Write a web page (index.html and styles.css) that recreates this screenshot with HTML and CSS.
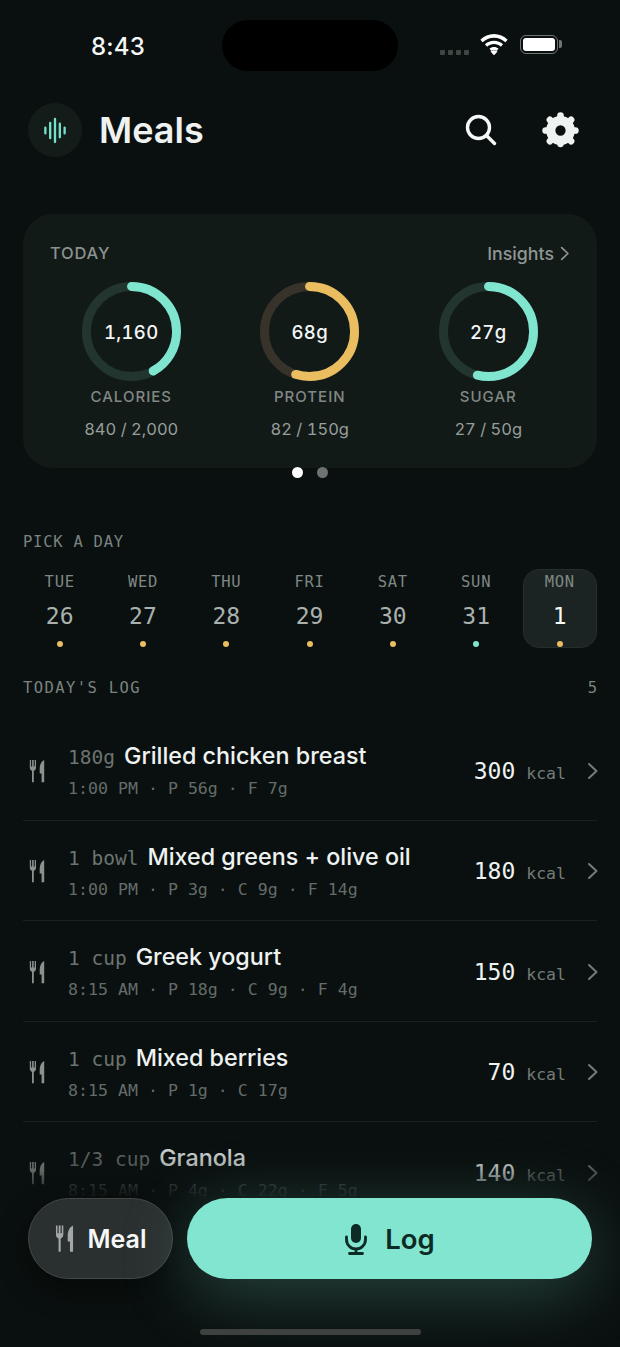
FILE: index.html
```html
<!DOCTYPE html>
<html lang="en">
<head>
<meta charset="utf-8">
<title>Meals</title>
<link rel="stylesheet" href="styles.css">
</head>
<body>
<svg class="defs" width="0" height="0" aria-hidden="true">
  <symbol id="cutlery" viewBox="0 0 16 24">
    <path d="M.8 1h1.300v6.600h1V1h1.600v6.600h1V1h1.300v7.600c0 1.700-.9 2.900-2.200 3.300V23.200H3V11.900C1.700 11.500.8 10.300.8 8.600z"/>
    <path d="M15.200 1v22.200h-2.600v-8.700h-1.900V9.500c0-4 1.800-7.200 4.500-8.500z"/>
  </symbol>
  <symbol id="chev" viewBox="0 0 12 18">
    <path d="M2 2l7.500 7L2 16" fill="none" stroke="currentColor" stroke-width="2" stroke-linecap="round" stroke-linejoin="round"/>
  </symbol>
</svg>
<div class="phone">
  <div class="status">
    <span class="time">8:43</span>
    <span class="island"></span>
    <div class="status-right">
      <span class="signal"><i></i><i></i><i></i><i></i></span>
      <svg class="wifi" viewBox="2 1 24 18.500"><path d="M14 4.200c3.900 0 7.400 1.500 10 4l2-2.200C22.800 2.900 18.600 1 14 1S5.200 2.900 2 6l2 2.200c2.600-2.500 6.100-4 10-4zm0 5.700c2.300 0 4.400.9 6 2.400l2-2.200c-2.100-2-4.900-3.200-8-3.200s-5.900 1.200-8 3.200l2 2.200c1.600-1.500 3.700-2.400 6-2.400zm0 5.500c-1.200 0-2.200.4-3.100 1.100l3.100 3.300 3.100-3.300c-.9-.7-1.900-1.100-3.100-1.100zm0-2.900c1.500 0 2.900.6 4 1.500l-2 2.100c-.6-.3-1.300-.5-2-.5s-1.400.2-2 .5l-2-2.100c1.100-.9 2.500-1.500 4-1.500z"/></svg>
      <span class="battery"><span class="battery-fill"></span></span>
    </div>
  </div>

  <header class="topbar">
    <span class="logo">
      <svg viewBox="0 0 24 28" class="wave"><path d="M2 11v6M7 6v16M12 2v24M17 7v14M22 11v6"/></svg>
    </span>
    <h1>Meals</h1>
    <svg class="search" viewBox="0 0 32 32"><circle cx="13.500" cy="13.500" r="11"/><path d="M21.500 21.500l8 8"/></svg>
    <svg class="gear" viewBox="0 0 36 36"><circle cx="18" cy="18" r="9.500" class="gear-ring"/><path class="gear-teeth" d="M18 5v-1.500M18 31v-1.500M5 18H3.500M32.500 18H31M8.800 8.800l-1.100-1.100M28.300 28.300l-1.100-1.100M8.800 27.200l-1.100 1.100M28.300 7.700l-1.100 1.100"/></svg>
  </header>

  <section class="card">
    <div class="card-head">
      <span class="today">TODAY</span>
      <span class="insights">Insights <svg class="chev-small"><use href="#chev"/></svg></span>
    </div>
    <div class="rings">
      <div class="ring-col">
        <div class="ring">
          <svg viewBox="0 0 100 100"><circle cx="50" cy="50" r="45.500" class="track track-mint"/><circle cx="50" cy="50" r="45.500" pathLength="100" stroke-dasharray="42 100" class="arc arc-mint"/></svg>
          <span class="ring-value">1,160</span>
        </div>
        <span class="ring-label">CALORIES</span>
        <span class="ring-sub">840 / 2,000</span>
      </div>
      <div class="ring-col">
        <div class="ring">
          <svg viewBox="0 0 100 100"><circle cx="50" cy="50" r="45.500" class="track track-gold"/><circle cx="50" cy="50" r="45.500" pathLength="100" stroke-dasharray="55 100" class="arc arc-gold"/></svg>
          <span class="ring-value">68g</span>
        </div>
        <span class="ring-label">PROTEIN</span>
        <span class="ring-sub">82 / 150g</span>
      </div>
      <div class="ring-col">
        <div class="ring">
          <svg viewBox="0 0 100 100"><circle cx="50" cy="50" r="45.500" class="track track-mint"/><circle cx="50" cy="50" r="45.500" pathLength="100" stroke-dasharray="54 100" class="arc arc-mint"/></svg>
          <span class="ring-value">27g</span>
        </div>
        <span class="ring-label">SUGAR</span>
        <span class="ring-sub">27 / 50g</span>
      </div>
    </div>
  </section>
  <div class="pager"><i class="on"></i><i></i></div>

  <h2 class="section-title pick">PICK A DAY</h2>
  <div class="days">
    <div class="day"><span class="dow">TUE</span><span class="num">26</span><i class="dot gold"></i></div>
    <div class="day"><span class="dow">WED</span><span class="num">27</span><i class="dot gold"></i></div>
    <div class="day"><span class="dow">THU</span><span class="num">28</span><i class="dot gold"></i></div>
    <div class="day"><span class="dow">FRI</span><span class="num">29</span><i class="dot gold"></i></div>
    <div class="day"><span class="dow">SAT</span><span class="num">30</span><i class="dot gold"></i></div>
    <div class="day"><span class="dow">SUN</span><span class="num">31</span><i class="dot mint"></i></div>
    <div class="day selected"><span class="dow">MON</span><span class="num">1</span><i class="dot gold"></i></div>
  </div>

  <div class="log-head">
    <h2 class="section-title log-title">TODAY'S LOG</h2>
    <span class="count">5</span>
  </div>

  <ul class="log">
    <li class="row">
      <svg class="row-icon"><use href="#cutlery"/></svg>
      <div class="row-main">
        <div class="row-title"><span class="qty">180g</span><span class="name">Grilled chicken breast</span></div>
        <div class="row-sub">1:00 PM · P 56g · F 7g</div>
      </div>
      <div class="row-kcal"><b>300</b><span>kcal</span></div>
      <svg class="chev"><use href="#chev"/></svg>
    </li>
    <li class="row">
      <svg class="row-icon"><use href="#cutlery"/></svg>
      <div class="row-main">
        <div class="row-title"><span class="qty">1 bowl</span><span class="name">Mixed greens + olive oil</span></div>
        <div class="row-sub">1:00 PM · P 3g · C 9g · F 14g</div>
      </div>
      <div class="row-kcal"><b>180</b><span>kcal</span></div>
      <svg class="chev"><use href="#chev"/></svg>
    </li>
    <li class="row">
      <svg class="row-icon"><use href="#cutlery"/></svg>
      <div class="row-main">
        <div class="row-title"><span class="qty">1 cup</span><span class="name">Greek yogurt</span></div>
        <div class="row-sub">8:15 AM · P 18g · C 9g · F 4g</div>
      </div>
      <div class="row-kcal"><b>150</b><span>kcal</span></div>
      <svg class="chev"><use href="#chev"/></svg>
    </li>
    <li class="row">
      <svg class="row-icon"><use href="#cutlery"/></svg>
      <div class="row-main">
        <div class="row-title"><span class="qty">1 cup</span><span class="name">Mixed berries</span></div>
        <div class="row-sub">8:15 AM · P 1g · C 17g</div>
      </div>
      <div class="row-kcal"><b>70</b><span>kcal</span></div>
      <svg class="chev"><use href="#chev"/></svg>
    </li>
    <li class="row">
      <svg class="row-icon"><use href="#cutlery"/></svg>
      <div class="row-main">
        <div class="row-title"><span class="qty">1/3 cup</span><span class="name">Granola</span></div>
        <div class="row-sub">8:15 AM · P 4g · C 22g · F 5g</div>
      </div>
      <div class="row-kcal"><b>140</b><span>kcal</span></div>
      <svg class="chev"><use href="#chev"/></svg>
    </li>
  </ul>

  <div class="fade"></div>
  <div class="actions">
    <button class="btn-meal"><svg class="meal-icon"><use href="#cutlery"/></svg>Meal</button>
    <button class="btn-log">
      <svg class="mic" viewBox="0 0 24 32"><rect x="7" y="1" width="10" height="19" rx="5" class="mic-body"/><path d="M2.500 14v2.500a9.500 9.500 0 0 0 19 0V14M12 26v4.500M5.500 30.500h13" class="mic-stand"/></svg>
      Log
    </button>
  </div>
  <div class="home"></div>
</div>
</body>
</html>
```

FILE: styles.css
```css
* { box-sizing: border-box; margin: 0; padding: 0; }
html, body { width: 620px; height: 1347px; overflow: hidden; background: #0a100f; }
body { font-family: Inter, "Liberation Sans", sans-serif; color: #eef3f1; }
.defs { position: absolute; }
.phone { position: relative; width: 620px; height: 1347px; overflow: hidden; background: #0a100f; }

.status { display: flex; align-items: center; height: 51px; margin-top: 20px; padding-left: 91px; }
.time { width: 131px; font-size: 24px; font-weight: 500; color: #f6f8f7; padding-top: 1px; letter-spacing: .2px; }
.island { width: 176px; height: 51px; border-radius: 26px; background: #000; }
.status-right { display: flex; align-items: center; margin-left: 42px; }
.signal { display: flex; gap: 3px; margin-top: 14px; margin-right: 11px; }
.signal i { width: 5px; height: 5px; border-radius: 1px; background: #3f4543; }
.wifi { width: 28px; height: 21px; fill: #fff; margin-top: -3px; margin-right: 12px; }
.battery { position: relative; width: 38px; height: 19px; border: 1.500px solid #6f7573; border-radius: 6px; padding: 2px; margin-top: -2px; }
.battery::after { content: ""; position: absolute; right: -5px; top: 4px; width: 3px; height: 8px; border-radius: 0 2px 2px 0; background: #6f7573; }
.battery-fill { display: block; height: 100%; border-radius: 3px; background: #fff; }

.topbar { display: flex; align-items: center; margin-top: 32px; padding: 0 41px 0 28px; height: 54px; }
.logo { display: flex; align-items: center; justify-content: center; width: 54px; height: 54px; border-radius: 50%; background: #141c1a; }
.wave { width: 24px; height: 27px; fill: none; stroke: #74e0c9; stroke-width: 2.400; stroke-linecap: round; }
h1 { flex: 1; margin-left: 17px; font-size: 36px; font-weight: 600; color: #eef3f1; }
.search { width: 32px; height: 32px; margin-right: 45px; fill: none; stroke: #f6f8f7; stroke-width: 3.400; stroke-linecap: round; }
.gear { width: 37px; height: 37px; }
.gear-ring { fill: none; stroke: #eef3f1; stroke-width: 9; }
.gear-teeth { fill: none; stroke: #eef3f1; stroke-width: 6.500; stroke-linecap: round; }

.card { margin: 57px 23px 0; height: 254px; border-radius: 30px; background: #121a18; padding: 27px 27px 0; }
.card-head { display: flex; justify-content: space-between; align-items: center; height: 24px; }
.today { font-size: 16.500px; letter-spacing: .8px; color: #8a918e; font-weight: 500; }
.insights { display: flex; align-items: center; gap: 6px; font-size: 17.800px; font-weight: 500; color: #8f9694; }
.chev-small { width: 10px; height: 15px; }
.rings { display: grid; grid-template-columns: 178.500px 178.500px 178.500px; margin: 17px 0 0 -8px; }
.ring-col { display: flex; flex-direction: column; align-items: center; }
.ring { position: relative; width: 99px; height: 99px; }
.ring svg { display: block; width: 99px; height: 99px; transform: rotate(-90deg); }
.track, .arc { fill: none; stroke-width: 9; }
.arc { stroke-linecap: round; }
.track-mint { stroke: #22352f; }
.track-gold { stroke: #38332a; }
.arc-mint { stroke: #7fe5cf; }
.arc-gold { stroke: #e9bd60; }
.ring-value { position: absolute; inset: 0; display: flex; align-items: center; justify-content: center; font-size: 18.500px; font-weight: 500; color: #f3f6f5; font-variant-numeric: tabular-nums; letter-spacing: .3px; }
.ring-label { margin-top: 7px; font-size: 15px; font-weight: 500; letter-spacing: 1px; color: #818886; line-height: 18px; }
.ring-sub { margin-top: 13px; font-size: 16.500px; color: #979e9b; line-height: 20px; font-variant-numeric: tabular-nums; }

.pager { display: flex; justify-content: center; gap: 14px; margin-top: -1px; }
.pager i { width: 11px; height: 11px; border-radius: 50%; background: #6e7371; }
.pager i.on { background: #fff; }

.section-title { font-family: "DejaVu Sans Mono", monospace; font-size: 15.500px; font-weight: 400; letter-spacing: .75px; color: #7b8380; line-height: 20px; }
.pick { margin: 54px 23px 0; }
.log-title { letter-spacing: 1.400px; }

.days { display: grid; grid-template-columns: repeat(7, 83.300px); margin: 17px 0 0 18px; }
.day { display: flex; flex-direction: column; align-items: center; height: 79px; padding-top: 3px; }
.day.selected { width: 74px; margin-left: 5px; border-radius: 16px; background: #1b2422; border: 1px solid #252e2c; padding-top: 2px; }
.dow { font-family: "DejaVu Sans Mono", monospace; font-size: 15.500px; letter-spacing: .7px; color: #7f8784; line-height: 20px; }
.num { font-family: "DejaVu Sans Mono", monospace; font-size: 23px; color: #a9b0ad; line-height: 30px; margin-top: 9px; }
.selected .num { color: #f6f8f7; }
.dot { width: 6px; height: 6px; border-radius: 50%; margin-top: 10px; }
.dot.gold { background: #e9bd60; }
.dot.mint { background: #7fe5cf; }

.log-head { display: flex; justify-content: space-between; align-items: center; margin: 30px 23px 0; height: 20px; }
.count { font-family: "DejaVu Sans Mono", monospace; font-size: 15.500px; color: #7b8380; }

.log { list-style: none; margin: 22px 23px 0; }
.row { display: flex; align-items: center; height: 100.500px; padding-top: 2px; border-bottom: 1px solid #1a211f; }
.row-icon { width: 16px; height: 24px; margin: 0 0 0 6px; fill: #8a918e; flex: none; }
.row-main { flex: 1; margin-left: 23px; }
.row-title { display: flex; align-items: baseline; gap: 9px; height: 32px; }
.qty { font-family: "DejaVu Sans Mono", monospace; font-size: 19.500px; color: #6c7471; }
.name { font-size: 23.300px; font-weight: 500; color: #eef3f1; }
.row-sub { font-family: "DejaVu Sans Mono", monospace; font-size: 16.600px; color: #646c69; line-height: 22px; margin-top: 5px; }
.row-kcal { display: flex; align-items: baseline; gap: 11px; }
.row-kcal b { font-family: "DejaVu Sans Mono", monospace; font-size: 23px; font-weight: 400; color: #eef3f1; }
.row-kcal span { font-family: "DejaVu Sans Mono", monospace; font-size: 16.500px; color: #747c79; }
.chev { width: 12px; height: 18px; margin: 0 -2px 0 21px; color: #747c79; flex: none; }

.fade { position: absolute; left: 0; right: 0; top: 1130px; height: 217px; background: linear-gradient(to bottom, rgba(10,16,15,0) 0, rgba(10,16,15,.32) 40px, rgba(10,16,15,.95) 68px, #0a100f 100%); }
.actions { position: absolute; left: 28px; top: 1198px; width: 564px; height: 81px; display: flex; gap: 14px; }
.actions button { height: 81px; border-radius: 41px; font-family: Inter, "Liberation Sans", sans-serif; font-weight: 600; display: flex; align-items: center; justify-content: center; }
.btn-meal { width: 145px; flex: none; gap: 14px; font-size: 25px; color: #f6f8f7; background: #2a302f; border: 1px solid #434948; box-shadow: 0 10px 30px rgba(0,0,0,.4); }
.meal-icon { width: 19px; height: 29px; fill: #a3a8a6; }
.btn-log { flex: 1; gap: 17px; font-size: 27.500px; color: #0d2a24; background: #81e5d0; border: 0; box-shadow: 0 14px 70px rgba(127,229,207,.26); }
.mic { width: 24px; height: 32px; }
.mic-body { fill: #0d2a24; }
.mic-stand { fill: none; stroke: #0d2a24; stroke-width: 2.800; stroke-linecap: round; }
.home { position: absolute; left: 200px; top: 1329px; width: 221px; height: 6px; border-radius: 3px; background: #3d4241; }
```
